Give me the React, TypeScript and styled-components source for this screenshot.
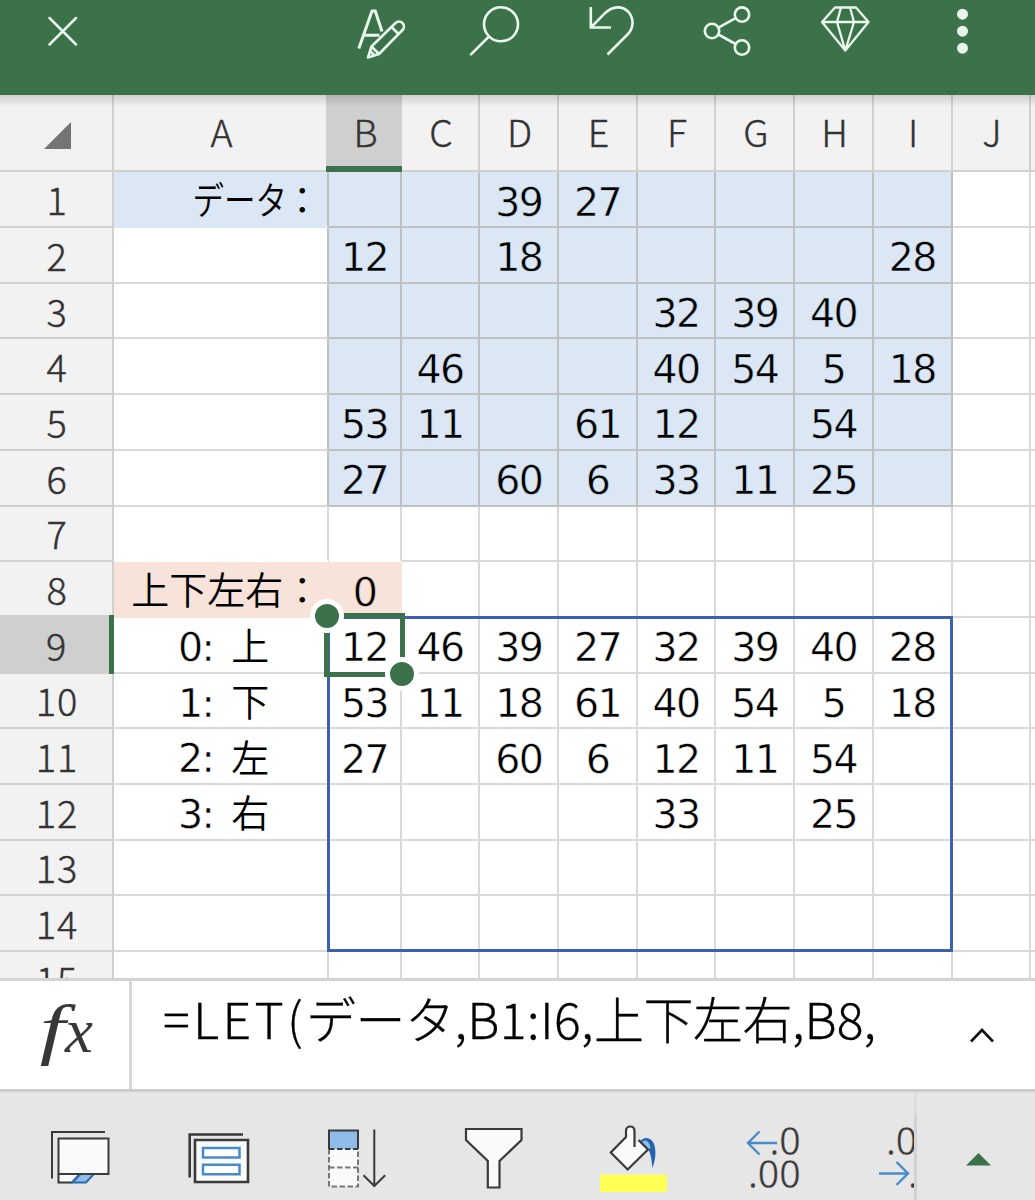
import React from "react";
import styled, { createGlobalStyle } from "styled-components";

const GREEN = "#3b724a";
const LINE = "#d8d9db";
const HEAD_LINE = "#d0d0d0";
const DATA_LINE = "#bfc0c2";
const UI_FONT = '"Noto Sans CJK JP", "Noto Sans", sans-serif';
const CELL_FONT = '"DejaVu Sans", "Noto Sans CJK JP", sans-serif';

const Global = createGlobalStyle`
  * { box-sizing: border-box; }
  body { margin: 0; background: #fff; overflow: hidden; }
`;

const Screen = styled.main`
  width: 1035px;
  height: 1200px;
  display: flex;
  flex-direction: column;
  overflow: hidden;
  background: #fff;
`;

const AppBar = styled.header`
  height: 95px;
  flex: none;
  display: flex;
  background: ${GREEN};
  svg { display: block; flex: none; fill: none; stroke: #e9f7ec; stroke-width: 2.6; stroke-linecap: round; stroke-linejoin: round; }
`;

const Spacer = styled.div`
  flex: 1;
`;

const SheetArea = styled.section`
  position: relative;
  height: 883.3px;
  flex: none;
  overflow: hidden;
`;

const BarShadow = styled.div`
  position: absolute;
  inset: 0 0 auto 0;
  height: 12px;
  background: linear-gradient(rgba(0, 0, 0, 0.14), rgba(0, 0, 0, 0));
`;

const Grid = styled.div`
  width: 1110px;
  display: grid;
  grid-template-columns: 114px 215.2px 72.5px 78.7px 78.7px 78.7px 78.7px 78.7px 78.7px 78.7px 78.7px 78.7px;
  grid-template-rows: 77.4px repeat(15, 55.7px);
`;

const Header = styled.div<{ $active?: boolean; $row?: boolean }>`
  display: flex;
  justify-content: center;
  align-items: center;
  overflow: hidden;
  font: 300 ${(p) => (p.$row ? 38 : 37.5)}px/1 ${UI_FONT};
  -webkit-text-stroke: 0.4px #333;
  letter-spacing: ${(p) => (p.$row ? "0.8px" : "0")};
  color: #333;
  padding: 0 0 ${(p) => (p.$row ? 0 : 3)}px 2px;
  background: ${(p) => (p.$active ? "#cfcfcf" : "#f2f2f2")};
  border-right: 2px solid ${HEAD_LINE};
  border-bottom: 2px solid ${HEAD_LINE};
  ${(p) => p.$active && !p.$row && `border-bottom: 6px solid ${GREEN}; border-right: 0; padding-bottom: 0; padding-top: 1px; padding-left: 3px; margin-left: -3px;`}
  ${(p) => p.$active && p.$row && `border-right: 5px solid ${GREEN}; border-bottom: 0; margin: -3px 0 0; padding-top: 1px; padding-left: 4px;`}
`;

const Corner = styled(Header)`
  justify-content: flex-end;
  padding: 0 41px 0 0;
  svg { display: block; margin-top: 5px; stroke: none; }
`;

const Cell = styled.div<{ $fill: string; $right: string; $bottom: string; $align: "end" | "choice" | "center" }>`
  display: flex;
  align-items: center;
  justify-content: ${(p) => (p.$align === "end" ? "flex-end" : "center")};
  padding: ${(p) => (p.$align === "end" ? "0 6px 2px 0" : p.$align === "choice" ? "6px 0 0 6px" : "6.5px 0 0 0")};
  overflow: hidden;
  white-space: pre;
  font: 400 39.5px/1 ${CELL_FONT};
  letter-spacing: -1.6px;
  color: #000;
  -webkit-text-stroke: ${(p) => (p.$align === "end" ? "0" : "0.5px")} ${(p) => p.$fill};
  background: ${(p) => p.$fill};
  border-right: 2px solid ${(p) => p.$right};
  border-bottom: 2px solid ${(p) => p.$bottom};
`;

const Jp = styled.span<{ $squeeze?: number; $choice?: boolean }>`
  font-family: ${UI_FONT};
  font-weight: 350;
  font-size: 38px;
  letter-spacing: 0;
  -webkit-text-stroke: 0;
  display: inline-block;
  transform: scaleX(${(p) => p.$squeeze ?? 1});
  transform-origin: right;
  ${(p) => p.$choice && "margin: -7px 0 0 7px;"}
  ${(p) => p.$squeeze && "margin-right: -4px;"}
`;

const Spill = styled.div`
  position: absolute;
  left: 326.5px;
  top: 521px;
  width: 626.8px;
  height: 336px;
  border: 3px solid #3d60b2;
`;

const Selection = styled.div`
  position: absolute;
  left: 324px;
  top: 517.5px;
  width: 81px;
  height: 64.5px;
  border: 5px solid ${GREEN};
`;

const Handle = styled.div<{ $end?: boolean }>`
  position: absolute;
  width: 34px;
  height: 34px;
  border-radius: 50%;
  background: ${GREEN};
  border: 5.5px solid #fff;
  left: ${(p) => (p.$end ? 385 : 309.5)}px;
  top: ${(p) => (p.$end ? 562 : 503.5)}px;
`;

const FormulaBar = styled.section`
  height: 114px;
  flex: none;
  display: flex;
  background: #fff;
  border-top: 3px solid #d2d3d4;
  border-bottom: 3px solid #cdcdcd;
`;

const FxButton = styled.div`
  width: 132px;
  border-right: 3px solid #d9d9d9;
  display: flex;
  align-items: baseline;
  padding: 14px 0 0 43px;
  color: #383838;
  font: italic 400 68px/1 "Liberation Serif", serif;
`;

const FxF = styled.span`
  display: inline-block;
  transform: scaleX(1.35);
`;

const FxX = styled.span`
  font-size: 63px;
  margin-left: 3px;
`;

const Formula = styled.div`
  flex: 1;
  padding: 11px 0 0 31px;
  font: 300 50px/1 ${UI_FONT};
  -webkit-text-stroke: 0.3px #000;
  white-space: pre;
  color: #000;
`;

const FormulaPart = styled.span<{ $gap: number }>`
  letter-spacing: ${(p) => p.$gap}px;
`;

const Expand = styled.div`
  width: 107px;
  display: flex;
  justify-content: center;
  align-items: center;
`;

const Tools = styled.footer`
  flex: 1;
  display: flex;
  background: #e6e6e6;
`;

const ToolList = styled.div`
  width: 914px;
  height: 108px;
  display: flex;
  overflow: hidden;
  svg { flex: none; display: block; fill: none; stroke: #3a3a3a; stroke-width: 2; }
`;

const NumText = styled.text`
  font: 400 37.5px "Open Sans", "Noto Sans", sans-serif;
  fill: #383838;
  stroke: #e6e6e6;
  stroke-width: 0.3px;
`;

const MenuButton = styled.div`
  flex: 1;
  display: flex;
  padding: 61px 0 0 49px;
  border: 0 solid;
  border-image: linear-gradient(#dedede 20%, #d2d2d2 22%) 1;
  border-width: 0 0 0 3px;
`;

const letters = ["A", "B", "C", "D", "E", "F", "G", "H", "I", "J", "K"];

const values: Record<number, string[]> = {
  1: ["", "", "39", "27", "", "", "", ""],
  2: ["12", "", "18", "", "", "", "", "28"],
  3: ["", "", "", "", "32", "39", "40", ""],
  4: ["", "46", "", "", "40", "54", "5", "18"],
  5: ["53", "11", "", "61", "12", "", "54", ""],
  6: ["27", "", "60", "6", "33", "11", "25", ""],
  8: ["0"],
  9: ["12", "46", "39", "27", "32", "39", "40", "28"],
  10: ["53", "11", "18", "61", "40", "54", "5", "18"],
  11: ["27", "", "60", "6", "12", "11", "54", ""],
  12: ["", "", "", "", "33", "", "25", ""],
};

const choices: Record<number, [string, string]> = {
  9: ["0: ", "上"],
  10: ["1: ", "下"],
  11: ["2: ", "左"],
  12: ["3: ", "右"],
};

function cellLook(row: number, col: number) {
  const data = row <= 6 && col >= 1 && col <= 8;
  const input = row === 8 && col <= 1;
  const title = row === 1 && col === 0;
  const blue = "#dce7f5";
  const peach = "#f7e3d9";
  const fill = data || title ? blue : input ? peach : "#fff";
  let right = data || (row <= 6 && col === 0) ? DATA_LINE : LINE;
  let bottom = data ? DATA_LINE : LINE;
  if (title) bottom = blue;
  if (input) right = bottom = peach;
  if (row === 7 && col <= 1) bottom = "#fff";
  const align: "end" | "choice" | "center" =
    col === 0 ? (row === 1 || row === 8 ? "end" : "choice") : "center";
  return { $fill: fill, $right: right, $bottom: bottom, $align: align };
}

function CellText({ row, col }: { row: number; col: number }) {
  if (col > 0) return <>{values[row]?.[col - 1] ?? ""}</>;
  if (row === 1)
    return (
      <>
        <Jp $squeeze={0.83}>データ</Jp>
        <Jp>：</Jp>
      </>
    );
  if (row === 8) return <Jp>上下左右：</Jp>;
  const choice = choices[row];
  return choice ? (
    <>
      {choice[0]}
      <Jp $choice>{choice[1]}</Jp>
    </>
  ) : null;
}

function Sheet() {
  const rows = Array.from({ length: 15 }, (_, i) => i + 1);
  return (
    <SheetArea>
      <Grid>
        <Corner>
          <svg width="27" height="27"><path d="M27 0V27H0Z" fill="#747474" /></svg>
        </Corner>
        {letters.map((l) => (
          <Header key={l} $active={l === "B"}>{l === "K" ? "" : l}</Header>
        ))}
        {rows.map((r) => (
          <React.Fragment key={r}>
            <Header $row $active={r === 9}>{r}</Header>
            {letters.map((l, c) => (
              <Cell key={l} {...cellLook(r, c)}>
                <CellText row={r} col={c} />
              </Cell>
            ))}
          </React.Fragment>
        ))}
      </Grid>
      <BarShadow />
      <Spill />
      <Selection />
      <Handle />
      <Handle $end />
    </SheetArea>
  );
}

function TopBar() {
  return (
    <AppBar>
      <svg width="125" height="95" viewBox="0 0 125 95"><path d="M49.5 18 76 44.5M76 18 49.5 44.5" strokeWidth="2.5" /></svg>
      <Spacer />
      <svg width="117" height="95" viewBox="323 0 117 95">
        <path d="M358.8 48.5 372 11H375.3L382 31.5M364 35.3H379.5" strokeWidth="3" strokeLinecap="butt" />
        <path d="M368 57.5 371.5 46.5 395.5 23A4.8 4.8 0 0 1 402.5 30L379 54ZM371.5 46.5 379 54M391.5 27 398.5 34M370.5 51.5 374 55" />
      </svg>
      <svg width="114" height="95" viewBox="440 0 114 95"><circle cx="501" cy="24.3" r="17" /><path d="M489 36.5 471 54.3" /></svg>
      <svg width="116" height="95" viewBox="554 0 116 95"><path d="M590.8 7V27.5H611M590.8 27.5 604.5 13.7C613 5 623 6 628.5 12C634.5 19 633.5 28.5 627.5 34.5L607.5 54.5" strokeLinecap="butt" strokeLinejoin="miter" /></svg>
      <svg width="117" height="95" viewBox="670 0 117 95">
        <circle cx="712" cy="31" r="7.2" /><circle cx="742" cy="14.6" r="7.2" /><circle cx="742" cy="47.5" r="7.2" />
        <path d="M718.4 27.6 735.6 18.2M718.4 34.5 735.6 44" />
      </svg>
      <svg width="117" height="95" viewBox="787 0 117 95"><path d="M835 7.5H856L868.5 22 845.3 50.5 822 22ZM822 22H868.5M841 7.5 837 22 845.3 50.5 854 22 850 7.5" strokeWidth="2.3" /></svg>
      <svg width="131" height="95" viewBox="904 0 131 95"><g fill="#e9f4eb" stroke="none"><circle cx="962.5" cy="14.2" r="5.5" /><circle cx="962.5" cy="31.2" r="5.5" /><circle cx="962.5" cy="48.2" r="5.5" /></g></svg>
    </AppBar>
  );
}

function BottomTools() {
  return (
    <Tools>
      <ToolList>
        <svg width="150" height="108" viewBox="0 1092 150 108">
          <path d="M52 1178.5V1132H105" />
          <path d="M58.5 1138.5H108.5V1174H58.5Z" fill="#fafafa" />
          <path d="M58.5 1174V1182.5H72L80 1174" fill="#fafafa" />
          <path d="M72.5 1182.5 80.5 1174H94L86 1182.5Z" fill="#8fbce8" stroke="#2b6cb5" />
          <path d="M58 1174H109" />
        </svg>
        <svg width="138" height="108" viewBox="150 1092 138 108">
          <path d="M189.7 1177.5V1134.5H243" strokeWidth="2.6" />
          <path d="M195 1140H248V1182H195Z" fill="#fafafa" strokeWidth="2.6" />
          <path d="M203 1148H239.5V1157.5H203ZM203 1164.8H239.5V1174.3H203Z" fill="#fff" stroke="#488bcb" strokeWidth="2.5" />
        </svg>
        <svg width="137" height="108" viewBox="288 1092 137 108">
          <path d="M329 1149V1186.5H358V1149M329 1167.5H358" fill="#fafafa" stroke="#777" strokeDasharray="5.5 2.5" />
          <path d="M329 1130.5H358V1149H329Z" fill="#8fbce8" stroke="none" />
          <path d="M329 1149V1130.5H358V1149" />
          <path d="M329 1149H358" strokeDasharray="5.5 2.5" />
          <path d="M374.3 1129.5V1186M363.5 1175.3 374.3 1186 385.2 1175.3" />
        </svg>
        <svg width="138" height="108" viewBox="425 1092 138 108">
          <path d="M466 1129H521.5V1140L499.5 1161V1187.5H487.8V1161L466 1140Z" fill="#fafafa" strokeWidth="2.2" />
        </svg>
        <svg width="140" height="108" viewBox="563 1092 140 108">
          <path d="M600 1174.5H667V1192H600Z" fill="#ffff55" stroke="none" />
          <path d="M639.5 1142C644 1136 651 1137 654 1144C656.5 1151 655.5 1160 652.5 1168C651.5 1160 651 1153 648 1149.5Z" fill="#2463b0" stroke="none" />
          <path d="M641.5 1142.5C644.5 1139 649 1140 650.5 1148L648 1149.5Z" fill="#8fbce8" stroke="none" />
          <path d="M634.5 1147V1131C634.5 1125 626 1125 626 1131V1137L610.8 1152.5 627.7 1169.5 648 1149.5 638 1140" fill="#fafafa" stroke="none" />
          <path d="M634.5 1147V1131C634.5 1125 626 1125 626 1131V1137L610.8 1152.5 627.7 1169.5 648 1149.5 638.5 1140" strokeWidth="2.2" />
        </svg>
        <svg width="140" height="108" viewBox="703 1092 140 108">
          <NumText x="769.5" y="1155">.0</NumText>
          <NumText x="748" y="1188">.00</NumText>
          <path d="M777 1143H748M759.5 1131.5 748 1143 759.5 1154.5" stroke="#488bcb" strokeWidth="2.4" />
        </svg>
        <svg width="110" height="108" viewBox="843 1092 110 108">
          <NumText x="886" y="1155">.0</NumText>
          <NumText x="908" y="1188">.</NumText>
          <path d="M879 1173.5H908M896.5 1162 908 1173.5 896.5 1185" stroke="#488bcb" strokeWidth="2.4" />
        </svg>
      </ToolList>
      <MenuButton>
        <svg width="25" height="13"><path d="M0 12.5 12.5 0 25 12.5Z" fill={GREEN} /></svg>
      </MenuButton>
    </Tools>
  );
}

export default function App() {
  return (
    <Screen>
      <Global />
      <TopBar />
      <Sheet />
      <FormulaBar>
        <FxButton><FxF>f</FxF><FxX>x</FxX></FxButton>
        <Formula>
          <FormulaPart $gap={3.3}>=LET(</FormulaPart>
          <FormulaPart $gap={-0.5}>データ</FormulaPart>
          <FormulaPart $gap={0.4}>,B1:I6,</FormulaPart>
          <FormulaPart $gap={-0.5}>上下左右</FormulaPart>
          <FormulaPart $gap={0.1}>,B8,</FormulaPart>
        </Formula>
        <Expand>
          <svg width="28" height="18" viewBox="0 0 28 18"><path d="M3 15.5 14 4 25 15.5" fill="none" stroke="#111" strokeWidth="2.6" /></svg>
        </Expand>
      </FormulaBar>
      <BottomTools />
    </Screen>
  );
}
